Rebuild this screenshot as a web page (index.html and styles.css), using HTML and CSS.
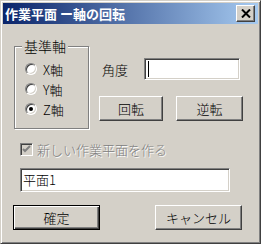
FILE: index.html
```html
<!DOCTYPE html>
<html lang="ja">
<head>
  <meta charset="UTF-8">
  <title>作業平面 ー軸の回転</title>
  <link rel="stylesheet" href="styles.css">
</head>
<body>
  <div class="window">
    <div class="titlebar">
      <span class="title">作業平面 ー軸の回転</span>
      <div class="close">
        <svg width="10" height="9" viewBox="0 0 10 9">
          <path d="M1 0.5 L9 8.5 M9 0.5 L1 8.5" stroke="#000" stroke-width="2" fill="none"/>
        </svg>
      </div>
    </div>

    <div class="content">
      <div class="top">
        <div class="group">
          <div class="group-title">基準軸</div>
          <div class="radio-row"><span class="radio"></span>X軸</div>
          <div class="radio-row"><span class="radio"></span>Y軸</div>
          <div class="radio-row"><span class="radio checked"></span>Z軸</div>
        </div>

        <div class="side">
          <div class="angle-row">
            <span class="angle-label">角度</span>
            <div class="field angle"><span class="caret"></span></div>
          </div>
          <div class="btn-row">
            <div class="btn rotate">回転</div>
            <div class="btn reverse">逆転</div>
          </div>
        </div>
      </div>

      <div class="check-row">
        <span class="check">
          <svg width="11" height="11" viewBox="0 0 11 11">
            <path d="M2 5 L4 7 L9 2" stroke="#808080" stroke-width="2" fill="none"/>
          </svg>
        </span>
        <span class="disabled">新しい作業平面を作る</span>
      </div>

      <div class="field name">平面1</div>

      <div class="footer">
        <div class="btn wide default">確定</div>
        <div class="btn wide">キャンセル</div>
      </div>
    </div>
  </div>
</body>
</html>
```

FILE: styles.css
```css
* { margin: 0; padding: 0; box-sizing: border-box; }
body {
  background: #d4d0c8;
  font-family: "Noto Sans CJK JP", "Liberation Sans", sans-serif;
  font-size: 13px; font-weight: 300; color: #000;
}

.window {
  width: 261px; height: 244px;
  background: #d4d0c8;
  border: 1px solid; border-color: #d4d0c8 #404040 #404040 #d4d0c8;
  box-shadow: inset 1px 1px #fff, inset -1px -1px #808080;
  padding: 2px;
}

.titlebar {
  height: 21px;
  display: flex; align-items: center; justify-content: space-between;
  background: linear-gradient(to right, #0a246a, #a6caf0);
  padding-left: 2px;
}

.title { color: #fff; font-weight: 700; font-size: 13px; line-height: 21px; }

.close {
  width: 19px; height: 17px; margin-right: 3px;
  background: #d4d0c8;
  border: 1px solid; border-color: #fff #404040 #404040 #fff;
  box-shadow: inset -1px -1px #808080;
  display: flex; align-items: center; justify-content: center;
}

.content { padding-left: 11px; }

.top { display: flex; align-items: flex-start; margin-top: 22px; }

.group {
  width: 75px; height: 83px;
  border: 1px solid #808080;
  box-shadow: 1px 1px #fff, inset 1px 1px #fff;
}

.group-title {
  display: table; margin: -8px 0 0 7px; padding: 0 2px;
  background: #d4d0c8; line-height: 14px; font-size: 14px;
}

.radio-row {
  height: 20px; display: flex; align-items: center;
  padding-left: 10px;
}
.group-title + .radio-row { margin-top: 6px; }

.radio {
  width: 12px; height: 12px; margin-right: 6px;
  border-radius: 50%; background: #fff;
  border: 1px solid; border-color: #808080 #fff #fff #808080;
  box-shadow: inset 1px 1px #404040, inset -1px -1px #d4d0c8;
  display: flex; align-items: center; justify-content: center;
}
.radio.checked::after {
  content: ""; width: 4px; height: 4px; border-radius: 50%; background: #000;
}

.side { margin: 12px 0 0 10px; }

.angle-row { display: flex; align-items: center; padding-left: 3px; }
.angle-label { width: 42px; }

.field {
  background: #fff;
  border: 1px solid; border-color: #808080 #fff #fff #808080;
  box-shadow: inset 1px 1px #404040, inset -1px -1px #d4d0c8;
}
.field.angle { width: 96px; height: 22px; padding: 2px 0 0 3px; }
.caret { display: block; width: 1px; height: 16px; background: #000; }

.btn-row { display: flex; gap: 13px; margin-top: 16px; }

.btn {
  height: 25px;
  display: flex; align-items: center; justify-content: center;
  background: #d4d0c8;
  border: 1px solid; border-color: #fff #404040 #404040 #fff;
  box-shadow: inset -1px -1px #808080;
}
.btn.rotate { width: 64px; }
.btn.reverse { width: 67px; }
.btn.wide { width: 87px; }
.btn.default {
  border-color: #000;
  box-shadow: inset 1px 1px #fff, inset -1px -1px #404040, inset -2px -2px #808080;
}

.check-row {
  display: flex; align-items: center; height: 13px;
  margin: 14px 0 0 6px;
}
.check {
  width: 13px; height: 13px; margin-right: 4px;
  background: #d4d0c8;
  border: 1px solid; border-color: #808080 #fff #fff #808080;
  box-shadow: inset 1px 1px #404040, inset -1px -1px #d4d0c8;
  display: flex; align-items: center; justify-content: center;
}
.disabled { color: #808080; text-shadow: 1px 1px #fff; }

.field.name {
  width: 210px; height: 24px; margin: 12px 0 0 6px;
  padding-left: 2px; line-height: 22px;
}

.footer {
  display: flex; justify-content: space-between;
  margin: 13px 16px 0 -1px;
}
```
